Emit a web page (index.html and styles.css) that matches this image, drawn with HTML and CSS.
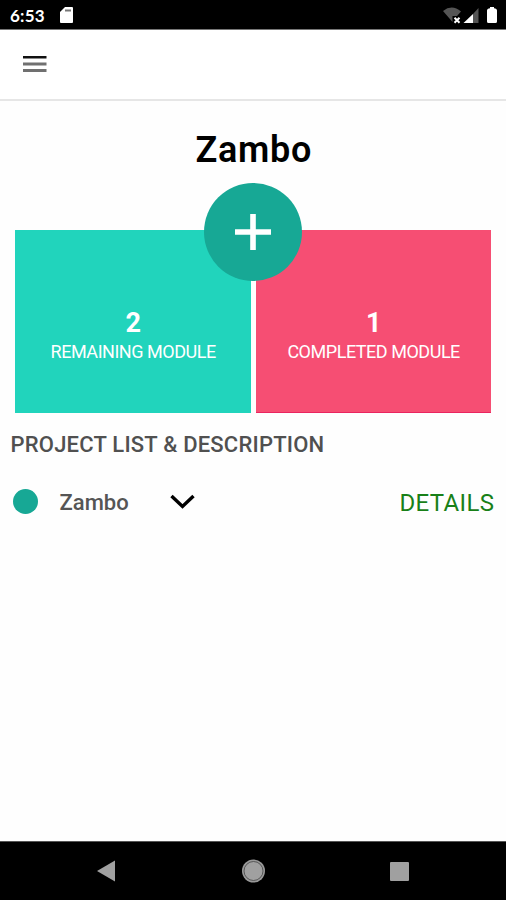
FILE: index.html
```html
<!DOCTYPE html>
<html lang="en">
<head>
<meta charset="utf-8">
<title>Zambo</title>
<link rel="stylesheet" href="styles.css">
</head>
<body>
<div class="screen">
  <div class="status">
    <span class="time">6:53</span>
    <svg class="sd" width="13" height="16" viewBox="0 0 13 16"><path fill="#fff" d="M5 0h7q1 0 1 1v14q0 1-1 1H1q-1 0-1-1V5z"/><path stroke="#777" stroke-width="2" d="M5 3.500h6"/></svg>
    <svg class="signals" width="56" height="18" viewBox="0 0 56 18">
      <path fill="#555" d="M0 4Q9-3 18 4.500L14 9H9.500v6Z"/>
      <path stroke="#fff" stroke-width="2" d="M11.500 10.700l5 5m0-5l-5 5"/>
      <path fill="#fff" d="M20.500 16L30 7v9z"/><path fill="#555" d="M30 7l5.500-6v15H30z"/>
      <path fill="#fff" d="M47 0h4v1.200q3 .3 3 2.300V14.500q0 1.500-1.500 1.500h-7q-1.500 0-1.500-1.500V3.500q0-2 3-2.300z"/>
    </svg>
  </div>
  <header class="toolbar">
    <svg width="24" height="18" viewBox="0 0 24 18"><path fill="#111" d="M0 1h23.500v2.500H0z"/><path fill="#707070" d="M0 7.500h23.500v3H0zM0 14h23.500v3H0z"/></svg>
  </header>
  <main class="content">
    <h1 class="title">Zambo</h1>
    <section class="cards">
      <div class="card remaining"><strong>2</strong><span>REMAINING MODULE</span></div>
      <div class="card completed"><strong>1</strong><span>COMPLETED MODULE</span></div>
      <button class="add" aria-label="Add"><svg width="38" height="38" viewBox="0 0 38 38"><path stroke="#fff" stroke-width="5.600" d="M1 19h36M19 1v36"/></svg></button>
    </section>
    <h2 class="heading">PROJECT LIST &amp; DESCRIPTION</h2>
    <div class="project">
      <i class="dot"></i>
      <span class="name">Zambo</span>
      <svg class="chevron" width="26" height="18" viewBox="0 0 26 18"><path fill="none" stroke="#000" stroke-width="3.400" d="M1.500 4l11 10.500L23.500 4"/></svg>
      <a class="details">DETAILS</a>
    </div>
  </main>
  <nav class="nav">
    <svg width="506" height="58" viewBox="0 0 506 58">
      <path fill="#a0a0a0" d="M97 29l18-10.500v21z"/>
      <circle cx="253.500" cy="29" r="11.500" fill="#999"/><circle cx="253.500" cy="29" r="9.500" fill="#a0a0a0" stroke="#444" stroke-width=".8"/>
      <rect x="390" y="20" width="19" height="19" rx="1" fill="#a0a0a0"/>
    </svg>
  </nav>
</div>
</body>
</html>
```
FILE: styles.css
```css
* { box-sizing: border-box; }
body { margin: 0; font-family: Roboto, sans-serif; background: #fff; }
.screen { width: 506px; height: 900px; display: flex; flex-direction: column; background: #fefefe; overflow: hidden; }
.status { height: 30px; background: #000; border-bottom: 1px solid #777; display: flex; align-items: flex-start; padding: 7px 7px 0 10px; }
.time { width: 50px; color: #fff; font: 700 17px/17px Lato, sans-serif; letter-spacing: .2px; }
.signals { margin-left: auto; }
.toolbar { height: 71px; border-bottom: 2px solid #e6e6e6; padding: 25px 23px; background: #fff; }
.toolbar svg, .status svg, .nav svg { display: block; }
.content { flex: 1; }
.title { margin: 0; height: 128.500px; padding-top: 28px; text-align: center; font-size: 36px; line-height: 42px; font-weight: 600; letter-spacing: .7px; text-indent: 1.500px; color: #000; }
.cards { position: relative; display: grid; grid-template-columns: 235.500px 235.500px; gap: 5px; height: 183.900px; margin: 0 15.400px; }
.card { display: flex; flex-direction: column; align-items: center; padding-top: 77px; color: #fff; }
.card strong { font-size: 27px; line-height: 32px; }
.card span { font-size: 18px; line-height: 22px; margin-top: 2px; white-space: nowrap; letter-spacing: -.47px; }
.remaining { background: #21d4bc; }
.completed { background: #f64e73; border-bottom: 1px solid #ea2460; }
.add { position: absolute; left: 189px; top: -47px; width: 98px; height: 98px; border: 0; padding: 0; border-radius: 50%; background: #17a895; display: grid; place-items: center; }
.heading { margin: 17.600px 0 0 10.500px; font-size: 22px; line-height: 28px; font-weight: 500; letter-spacing: .21px; color: #505050; white-space: nowrap; }
.project { display: flex; align-items: center; height: 40px; margin-top: 22.500px; padding: 0 11.700px 0 12.500px; }
.dot { width: 25px; height: 25px; border-radius: 50%; background: #17a895; }
.name { width: 110px; margin-left: 22px; padding-top: 3px; font-size: 22px; line-height: 28px; font-weight: 500; color: #555; }
.details { margin-left: auto; padding-top: 4px; font-size: 24px; letter-spacing: .35px; color: #188018; }
.nav { height: 59px; background: #000; border-top: 1px solid #555; }
```
